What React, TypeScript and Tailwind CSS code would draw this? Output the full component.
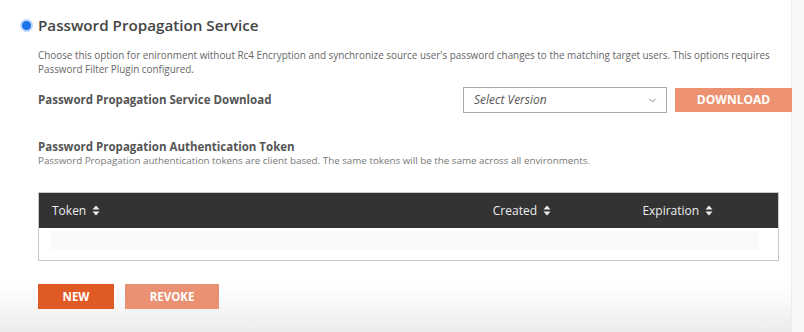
import { ChevronDown } from 'lucide-react';

const font = { fontFamily: '"Open Sans", "Noto Sans", sans-serif' };

function SortIcon() {
  return (
    <svg width="8" height="11" viewBox="0 0 8 11" className="inline-block ml-[6px]">
      <path d="M4 0.5 L7.5 4.5 H0.5 Z" fill="currentColor" />
      <path d="M4 10.5 L7.5 6.5 H0.5 Z" fill="currentColor" />
    </svg>
  );
}

export default function App() {
  return (
    <div
      style={font}
      className="w-[804px] h-[332px] overflow-hidden flex bg-[linear-gradient(to_bottom,#ffffff_0%,#ffffff_86%,#ececec_100%)]"
    >
      <div className="w-[792px] border-r border-[#ececec] pl-[22px] pt-[15px]">
        <div className="flex items-center gap-[7px] h-[20px]">
          <span className="w-[9px] h-[9px] rounded-full bg-[#1a73e8] ring-2 ring-[#bcd6fb]" />
          <h1 className="text-[15.2px] font-semibold text-[#444]">Password Propagation Service</h1>
        </div>

        <div className="pl-[16px]">
          <p className="mt-[13px] w-[740px] text-[9.9px] leading-[14px] text-[#666]">
            Choose this option for enironment without Rc4 Encryption and synchronize source user's password changes to the matching target users. This options requires Password Filter Plugin configured.
          </p>

          <div className="mt-[11px] flex items-center justify-between h-[26px] w-[754px]">
            <span className="text-[11.5px] font-bold text-[#555]">Password Propagation Service Download</span>
            <div className="flex items-center gap-[8px]">
              <div className="w-[204px] h-[26px] border border-[#aaa] flex items-center justify-between pl-[10px] pr-[8px]">
                <span className="italic text-[12px] text-[#555]">Select Version</span>
                <ChevronDown size={11} strokeWidth={1.8} className="text-[#666]" />
              </div>
              <button className="w-[117px] h-[24px] bg-[#ec9270] text-white text-[12px] font-bold">
                DOWNLOAD
              </button>
            </div>
          </div>

          <div className="mt-[27px] text-[11.5px] font-bold text-[#555] leading-[14px]">
            Password Propagation Authentication Token
          </div>
          <p className="text-[9.8px] leading-[13px] text-[#777]">
            Password Propagation authentication tokens are client based. The same tokens will be the same across all environments.
          </p>

          <div className="mt-[25px] w-[741px] border border-[#c8c8c8]">
            <div className="h-[35px] bg-[#333] text-[#eee] text-[12px] flex items-center">
              <div className="w-[441px] pl-[13px] flex items-center">Token<SortIcon /></div>
              <div className="w-[150px] pl-[14px] flex items-center">Created<SortIcon /></div>
              <div className="w-[150px] pl-[14px] flex items-center">Expiration<SortIcon /></div>
            </div>
            <div className="h-[32px] px-[12px] pt-[3px]">
              <div className="h-[19px] w-[708px] bg-[#fafafa]" />
            </div>
          </div>

          <div className="mt-[23px] flex gap-[11px]">
            <button className="w-[76px] h-[25px] bg-[#e05a26] text-white text-[11.5px] font-bold">NEW</button>
            <button className="w-[94px] h-[25px] bg-[#eb9173] text-white text-[11.5px] font-bold">REVOKE</button>
          </div>
        </div>
      </div>
      <div className="flex-1 bg-[#f8f8f8]" />
    </div>
  );
}
